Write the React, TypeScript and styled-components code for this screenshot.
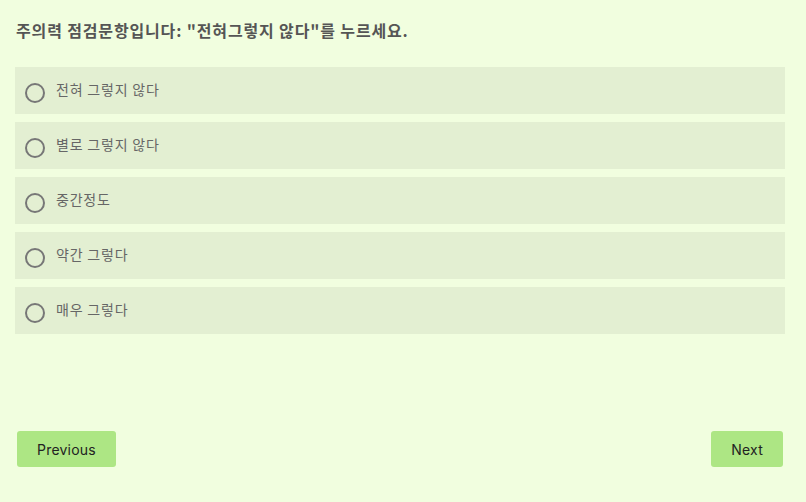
import React, { useState } from "react";
import styled, { createGlobalStyle } from "styled-components";

const GlobalStyle = createGlobalStyle`
  html, body {
    margin: 0;
    padding: 0;
    background: #f1fedf;
  }
  * {
    box-sizing: border-box;
  }
`;

const options = [
  "전혀 그렇지 않다",
  "별로 그렇지 않다",
  "중간정도",
  "약간 그렇다",
  "매우 그렇다",
];

const App = () => {
  const [selected, setSelected] = useState<number | null>(null);

  return (
    <>
      <GlobalStyle />
      <Page>
        <Question>주의력 점검문항입니다: "전혀그렇지 않다"를 누르세요.</Question>
        <OptionList>
          {options.map((label, index) => (
            <OptionRow key={label} onClick={() => setSelected(index)}>
              <Radio checked={selected === index} />
              <OptionLabel>{label}</OptionLabel>
            </OptionRow>
          ))}
        </OptionList>
        <Footer>
          <NavButton>Previous</NavButton>
          <NavButton>Next</NavButton>
        </Footer>
      </Page>
    </>
  );
};

const Page = styled.div`
  width: 806px;
  height: 502px;
  padding: 19px 21px 0 15px;
  background: #f1fedf;
  display: flex;
  flex-direction: column;
`;

const Question = styled.h2`
  margin: 0 0 0 1px;
  font-family: "Noto Sans CJK KR", "Noto Sans", sans-serif;
  font-size: 16px;
  font-weight: 700;
  line-height: 22px;
  letter-spacing: 0.85px;
  color: #555555;
`;

const OptionList = styled.div`
  margin-top: 26px;
  display: flex;
  flex-direction: column;
  gap: 8px;
`;

const OptionRow = styled.div`
  height: 47px;
  background: #e3efd2;
  display: flex;
  align-items: center;
  padding: 0 0 0 10px;
  cursor: pointer;
`;

const Radio = styled.span<{ checked: boolean }>`
  width: 20px;
  height: 20px;
  margin-top: 4px;
  border-radius: 50%;
  border: 2px solid #777777;
  background: ${(props) => (props.checked ? "#777777" : "transparent")};
  box-shadow: ${(props) =>
    props.checked ? "inset 0 0 0 3px #e3efd2" : "none"};
  flex-shrink: 0;
`;

const OptionLabel = styled.span`
  margin-left: 11px;
  padding-bottom: 3px;
  font-family: "Noto Sans CJK KR", "Noto Sans", sans-serif;
  font-size: 14px;
  letter-spacing: 0.8px;
  color: #666666;
`;

const Footer = styled.div`
  margin-top: 97px;
  padding: 0 2px 0 2px;
  display: flex;
  justify-content: space-between;
`;

const NavButton = styled.button`
  height: 36px;
  padding: 0 20px;
  border: none;
  border-radius: 3px;
  background: #ade684;
  font-family: Inter, "Noto Sans", sans-serif;
  font-size: 14px;
  letter-spacing: 0.2px;
  color: #222222;
  cursor: pointer;
`;

export default App;
